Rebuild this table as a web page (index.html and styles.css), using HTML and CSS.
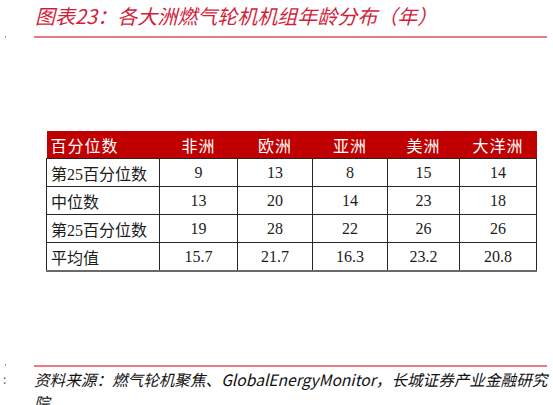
FILE: index.html
```html
<!DOCTYPE html>
<html lang="zh-CN">
<head>
<meta charset="utf-8">
<title>图表23</title>
<link rel="stylesheet" href="styles.css">
</head>
<body>
<div class="page">
  <div class="mark mark-top"></div>
  <div class="mark mark-foot"></div>
  <div class="mark mark-colon">:</div>
  <div class="title">图表23：各大洲燃气轮机机组年龄分布（年）</div>
  <div class="rule"></div>
  <table class="data">
    <colgroup>
      <col class="c0"><col class="c1"><col class="c2"><col class="c3"><col class="c4"><col class="c5">
    </colgroup>
    <thead>
      <tr><th class="first">百分位数</th><th>非洲</th><th>欧洲</th><th>亚洲</th><th>美洲</th><th>大洋洲</th></tr>
    </thead>
    <tbody>
      <tr><td class="first">第25百分位数</td><td>9</td><td>13</td><td>8</td><td>15</td><td>14</td></tr>
      <tr><td class="first">中位数</td><td>13</td><td>20</td><td>14</td><td>23</td><td>18</td></tr>
      <tr><td class="first">第25百分位数</td><td>19</td><td>28</td><td>22</td><td>26</td><td>26</td></tr>
      <tr class="last"><td class="first">平均值</td><td>15.7</td><td>21.7</td><td>16.3</td><td>23.2</td><td>20.8</td></tr>
    </tbody>
  </table>
  <div class="rule foot-rule"></div>
  <div class="source">资料来源：燃气轮机聚焦、GlobalEnergyMonitor，长城证券产业金融研究院</div>
</div>
</body>
</html>
```

FILE: styles.css
```css
html, body {
  margin: 0;
  padding: 0;
  background: #ffffff;
  overflow: hidden;
}

.page {
  position: relative;
  width: 553px;
  height: 405px;
  overflow: hidden;
  padding-left: 34px;
  box-sizing: border-box;
}

.title {
  padding-top: 2px;
  font-family: "Noto Sans CJK SC", "Noto Sans", sans-serif;
  font-style: italic;
  font-size: 20px;
  line-height: 27px;
  height: 27px;
  color: #d21e3b;
  padding-left: 1px;
  white-space: nowrap;
}

.rule {
  margin-top: 7px;
  width: 513px;
  height: 2px;
  background: #e77a87;
}

.data {
  margin-top: 93px;
  margin-left: 12px;
  border-collapse: collapse;
  table-layout: fixed;
  width: 490px;
  font-family: "Liberation Serif", "Noto Sans CJK SC", serif;
  font-size: 16px;
  color: #1c1c1c;
}

.c0 { width: 113px; }
.c1 { width: 78px; }
.c2 { width: 75px; }
.c3 { width: 75px; }
.c4 { width: 72px; }
.c5 { width: 77px; }

.data th {
  background: #c00000;
  color: #ffffff;
  font-family: "Noto Sans CJK SC", sans-serif;
  font-weight: normal;
  font-size: 16px;
  height: 27px;
  padding: 0;
  text-align: center;
  letter-spacing: 1px;
}

.data td {
  border: 1px solid #262626;
  height: 27px;
  padding: 0;
  text-align: center;
}

.data .first {
  text-align: left;
  padding-left: 4px;
}

.data tr.last td {
  border-bottom: 2px solid #6a6a6a;
}

.foot-rule {
  margin-top: 93px;
}

.source {
  margin-top: 1px;
  width: 519px;
  font-family: "Noto Sans CJK SC", "Noto Sans", sans-serif;
  font-style: italic;
  font-size: 15.6px;
  line-height: 23px;
  color: #111111;
}

.mark {
  position: absolute;
  left: 5px;
}

.mark-top {
  top: 36px;
  width: 1px;
  height: 2px;
  background: #e77a87;
}

.mark-foot {
  top: 364px;
  width: 1px;
  height: 2px;
  background: #e77a87;
}

.mark-colon {
  top: 372px;
  left: 3px;
  font-family: "Noto Sans CJK SC", sans-serif;
  font-size: 12px;
  line-height: 14px;
  color: #555;
}
```
